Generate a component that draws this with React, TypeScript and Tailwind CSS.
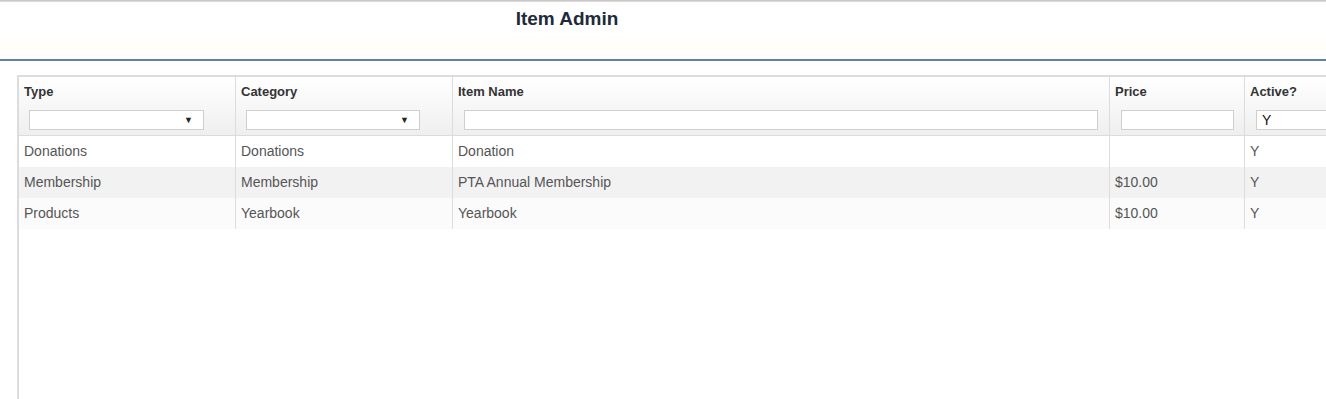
import React from "react";

type Row = { type: string; category: string; name: string; price: string; active: string };

const rows: Row[] = [
  { type: "Donations", category: "Donations", name: "Donation", price: "", active: "Y" },
  { type: "Membership", category: "Membership", name: "PTA Annual Membership", price: "$10.00", active: "Y" },
  { type: "Products", category: "Yearbook", name: "Yearbook", price: "$10.00", active: "Y" },
];

const rowBg = ["bg-[#ffffff]", "bg-[#f2f2f2]", "bg-[#fbfbfb]"];

function SelectBox({ width }: { width: string }) {
  return (
    <div className={`ml-[10px] ${width} h-[20px] border border-[#cfcfcf] bg-white flex items-center justify-end pr-[10px]`}>
      <span className="text-[9px] leading-none text-[#222]">▼</span>
    </div>
  );
}

function TextBox({ width, value }: { width: string; value?: string }) {
  return (
    <div className={`ml-[11px] ${width} h-[20px] border border-[#cfcfcf] bg-white flex items-center pl-[5px] text-[14px] text-[#111]`}>
      {value}
    </div>
  );
}

function HeadCell({ width, label, children, last }: { width: string; label: string; children: React.ReactNode; last?: boolean }) {
  return (
    <div className={`${width} shrink-0 ${last ? "" : "border-r border-[#dcdcdc]"} flex flex-col`}>
      <div className="pl-[5px] pt-[7px] h-[33px] text-[13px] font-bold text-[#333] leading-[16px]">{label}</div>
      {children}
    </div>
  );
}

function BodyCell({ width, text, last }: { width: string; text: string; last?: boolean }) {
  return (
    <div className={`${width} shrink-0 ${last ? "" : "border-r border-[#dcdcdc]"} pl-[5px] flex items-center text-[14px] text-[#555]`}>
      {text}
    </div>
  );
}

export default function App() {
  return (
    <div className="h-[399px] w-full overflow-hidden bg-white" style={{ fontFamily: '"Liberation Sans", Arial, sans-serif' }}>
      <div className="h-[2px] bg-gradient-to-b from-[#bdbdbd] to-[#e6e6e6]" />
      <div className="h-[57px] flex flex-col">
        <div className="h-[33px] w-[1134px] pt-[7px] text-center text-[19px] leading-[20px] font-bold text-[#1e2b3a]">
          Item Admin
        </div>
        <div className="flex-1 bg-[#fffefb]" />
      </div>
      <div className="h-[2px] bg-[#5f80b4]" />
      <div className="h-[14px]" />
      <div className="ml-[17px] border-l-2 border-t-2 border-[#dcdcdc] h-[400px] w-[1400px]">
        <div className="flex h-[59px] border-b border-[#dcdcdc] bg-gradient-to-b from-[#ffffff] to-[#efefef]">
          <HeadCell width="w-[217px]" label="Type">
            <SelectBox width="w-[175px]" />
          </HeadCell>
          <HeadCell width="w-[217px]" label="Category">
            <SelectBox width="w-[174px]" />
          </HeadCell>
          <HeadCell width="w-[657px]" label="Item Name">
            <TextBox width="w-[634px]" />
          </HeadCell>
          <HeadCell width="w-[135px]" label="Price">
            <TextBox width="w-[113px]" />
          </HeadCell>
          <HeadCell width="w-[135px]" label="Active?" last>
            <TextBox width="w-[113px]" value="Y" />
          </HeadCell>
        </div>
        {rows.map((r, i) => (
          <div key={i} className={`flex h-[31px] ${rowBg[i]}`}>
            <BodyCell width="w-[217px]" text={r.type} />
            <BodyCell width="w-[217px]" text={r.category} />
            <BodyCell width="w-[657px]" text={r.name} />
            <BodyCell width="w-[135px]" text={r.price} />
            <BodyCell width="w-[135px]" text={r.active} last />
          </div>
        ))}
      </div>
    </div>
  );
}
